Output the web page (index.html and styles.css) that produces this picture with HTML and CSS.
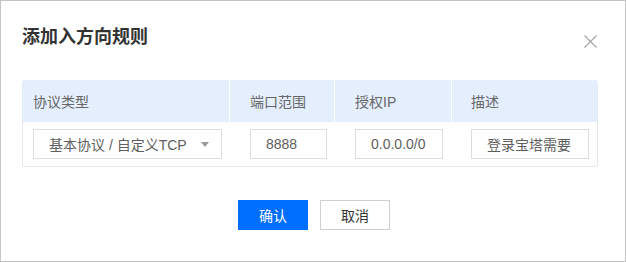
FILE: index.html
```html
<!DOCTYPE html>
<html lang="zh-CN">
<head>
<meta charset="utf-8">
<title>添加入方向规则</title>
<link rel="stylesheet" href="styles.css">
</head>
<body>
<div class="dialog">
  <div class="dialog-head">
    <h2 class="dialog-title">添加入方向规则</h2>
    <span class="dialog-close" aria-label="关闭">
      <svg width="13" height="13" viewBox="0 0 13 13"><path d="M0.5 0.5L12.5 12.5M12.5 0.5L0.5 12.5" stroke="#a6a6a6" stroke-width="1.2" fill="none"/></svg>
    </span>
  </div>
  <div class="rule-table">
    <div class="row row-head">
      <div class="cell c1">协议类型</div>
      <div class="cell c2">端口范围</div>
      <div class="cell c3">授权IP</div>
      <div class="cell c4">描述</div>
    </div>
    <div class="row row-body">
      <div class="cell c1">
        <div class="field select">
          <span>基本协议 / 自定义TCP</span>
          <span class="caret"></span>
        </div>
      </div>
      <div class="cell c2"><div class="field port">8888</div></div>
      <div class="cell c3"><div class="field ip">0.0.0.0/0</div></div>
      <div class="cell c4"><div class="field desc">登录宝塔需要</div></div>
    </div>
  </div>
  <div class="dialog-foot">
    <button class="btn btn-primary">确认</button>
    <button class="btn btn-default">取消</button>
  </div>
</div>
</body>
</html>
```
FILE: styles.css
```css
html, body {
  margin: 0;
  padding: 0;
  background: #ffffff;
}
body {
  font-family: "Liberation Sans", "Noto Sans CJK SC", sans-serif;
  font-size: 14px;
  color: #333;
}
.dialog {
  width: 626px;
  height: 262px;
  box-sizing: border-box;
  border: 1px solid #c4c4c4;
  padding: 0 21px;
  background: #fff;
}
.dialog-head {
  display: flex;
  justify-content: space-between;
  align-items: flex-start;
  padding: 23px 7px 0 0;
  height: 32px;
  margin-bottom: 24px;
}
.dialog-title {
  margin: 0;
  font-size: 18px;
  line-height: 26px;
  font-weight: bold;
  color: #333;
}
.dialog-close {
  display: block;
  width: 13px;
  height: 13px;
  margin-top: 11px;
  line-height: 0;
}
.rule-table {
  width: 576px;
  box-sizing: border-box;
  border: 1px solid #e6e9ef;
  border-top: none;
  border-radius: 3px;
  overflow: hidden;
}
.row {
  display: grid;
  grid-template-columns: 206px 105px 117px 146px;
}
.row-head {
  background: #e4eefd;
  height: 42px;
  color: #666;
}
.row-head .cell {
  display: flex;
  align-items: center;
}
.row-head .cell + .cell {
  border-left: 1px solid #ffffff;
}
.row-body {
  height: 44px;
  align-items: center;
}
.cell.c1 { padding-left: 10px; }
.cell.c2 { padding-left: 20px; }
.cell.c3 { padding-left: 20px; }
.cell.c4 { padding-left: 19px; }
.row-body .cell.c2,
.row-body .cell.c3 { padding-left: 21px; }
.row-body .cell.c4 { padding-left: 20px; }
.field {
  height: 30px;
  box-sizing: border-box;
  border: 1px solid #dcdcdc;
  padding-left: 15px;
  display: flex;
  align-items: center;
  color: #5e5e5e;
  background: #fff;
}
.select {
  width: 189px;
  justify-content: space-between;
  padding-right: 12px;
}
.caret {
  width: 0;
  height: 0;
  border-left: 4.5px solid transparent;
  border-right: 4.5px solid transparent;
  border-top: 5px solid #9a9a9a;
}
.port { width: 77px; }
.ip { width: 88px; }
.desc { width: 118px; }
.dialog-foot {
  display: flex;
  justify-content: center;
  gap: 12px;
  margin-top: 33px;
  padding-left: 2px;
}
.btn {
  width: 70px;
  height: 30px;
  box-sizing: border-box;
  font-family: "Liberation Sans", "Noto Sans CJK SC", sans-serif;
  font-size: 14px;
  padding: 0;
  cursor: pointer;
}
.btn-primary {
  background: #006eff;
  border: 1px solid #006eff;
  color: #fff;
}
.btn-default {
  background: #fff;
  border: 1px solid #d0d0d0;
  color: #333;
}
```
